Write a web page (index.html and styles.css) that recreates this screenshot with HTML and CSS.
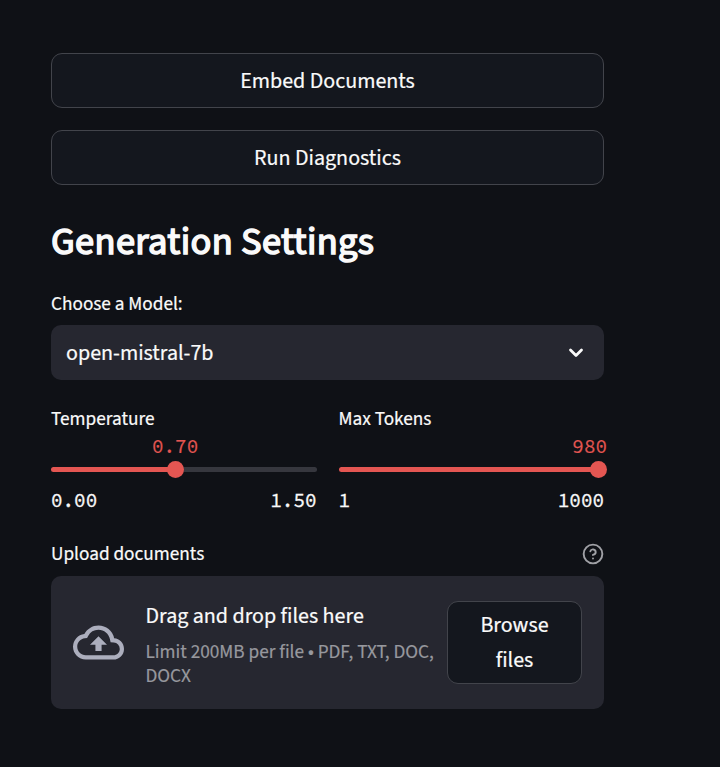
FILE: index.html
```html
<!DOCTYPE html>
<html lang="en">
<head>
<meta charset="utf-8">
<title>Generation Settings</title>
<link rel="stylesheet" href="styles.css">
</head>
<body>
<main class="panel">
  <button class="btn">Embed Documents</button>
  <button class="btn">Run Diagnostics</button>
  <h2 class="title">Generation Settings</h2>
  <div class="label model-label">Choose a Model:</div>
  <div class="select">
    <span>open-mistral-7b</span>
    <svg class="chevron" viewBox="0 0 16 10"><path d="M2.5 2l5.5 5.5 5.5-5.5"/></svg>
  </div>
  <div class="sliders">
    <section class="slider">
      <div class="label">Temperature</div>
      <div class="value value-temp">0.70</div>
      <div class="track track-temp"><i class="thumb thumb-temp"></i></div>
      <div class="range"><span>0.00</span><span>1.50</span></div>
    </section>
    <section class="slider">
      <div class="label">Max Tokens</div>
      <div class="value value-max">980</div>
      <div class="track"><i class="thumb thumb-max"></i></div>
      <div class="range"><span>1</span><span>1000</span></div>
    </section>
  </div>
  <div class="label upload-label"><span>Upload documents</span>
    <svg class="help" viewBox="0 0 24 24"><circle cx="12" cy="12" r="10.2"/><path d="M9.09 9a3 3 0 0 1 5.83 1c0 2-3 3-3 3M12 17h.01"/></svg>
  </div>
  <div class="drop">
    <svg class="cloud" viewBox="0 0 24 24"><path d="M19.35 10.04A7.49 7.49 0 0 0 12 4C9.11 4 6.6 5.64 5.35 8.04A5.994 5.994 0 0 0 0 14c0 3.31 2.69 6 6 6h13c2.76 0 5-2.24 5-5 0-2.64-2.05-4.78-4.65-4.96zM19 18H6c-2.21 0-4-1.79-4-4 0-2.05 1.53-3.76 3.56-3.97l1.07-.11.5-.95A5.469 5.469 0 0 1 12 6c2.62 0 4.88 1.86 5.39 4.43l.3 1.5 1.53.11A2.98 2.98 0 0 1 22 15c0 1.65-1.35 3-3 3zM8 13h2.55v3h2.9v-3H16l-4-4z"/></svg>
    <div class="copy">
      <div class="drag">Drag and drop files here</div>
      <div class="limit">Limit 200MB per file • PDF, TXT, DOC, DOCX</div>
    </div>
    <button class="browse">Browse files</button>
  </div>
</main>
</body>
</html>
```
FILE: styles.css
```css
* { box-sizing: border-box; }
body { margin: 0; background: #0f1116; color: #fafafa; font-family: "Source Sans Pro", "Source Sans 3", "Noto Sans CJK SC", "Noto Sans", sans-serif; font-size: 22px; -webkit-text-stroke: 0.2px; }
.panel { width: 553px; margin: 53px 0 0 51px; }
button { font: inherit; color: inherit; background: #14171e; border: 1px solid #42444b; border-radius: 11px; padding: 0; }
.btn { display: block; width: 100%; height: 55px; margin-bottom: 22px; padding-top: 1px; line-height: 53px; }
.title { margin: 33px 0 0; height: 48px; line-height: 48px; font-size: 38.5px; font-weight: 400; letter-spacing: 0.33px; -webkit-text-stroke: 1.5px; }
.label { height: 26px; line-height: 24px; font-size: 19.25px; }
.model-label { margin-top: 26px; }
.select { height: 55px; margin-top: 7px; padding: 0 20.5px 0 15px; display: flex; align-items: center; justify-content: space-between; background: #262730; border-radius: 10px; }
.chevron { width: 16px; height: 10px; fill: none; stroke: #fafafa; stroke-width: 2.8; stroke-linecap: round; stroke-linejoin: round; }
.sliders { display: grid; grid-template-columns: 1fr 1fr; gap: 22px; margin-top: 27px; }
.value { font: 19.25px/26px "Source Code Pro", "Liberation Mono", monospace; color: #e45652; height: 28px; }
.value-temp { padding-left: 101px; }
.value-max { text-align: right; margin-right: -3px; }
.track { height: 5px; margin-top: 6px; border-radius: 3px; position: relative; background: #e45652; }
.track-temp { background: linear-gradient(to right, #e45652 46.67%, #36373e 46.67%); }
.thumb { position: absolute; width: 17px; height: 17px; top: -6px; margin-left: -8.5px; border-radius: 50%; background: #e45652; }
.thumb-temp { left: 46.8%; }
.thumb-max { left: 98%; }
.range { display: flex; justify-content: space-between; height: 28px; margin-top: 15px; font: 19.25px/26px "Source Code Pro", "Liberation Mono", monospace; -webkit-text-stroke: 0.35px; }
.upload-label { margin-top: 27px; display: flex; justify-content: space-between; align-items: flex-start; }
.help { width: 22px; height: 22px; margin-top: 1px; fill: none; stroke: #a0a1a6; stroke-width: 2.1; stroke-linecap: round; }
.drop { height: 133px; margin-top: 8px; padding: 0 22px; display: flex; align-items: center; background: #262730; border-radius: 10px; }
.cloud { width: 51px; height: 51px; fill: #acaebd; flex: none; }
.copy { width: 301.5px; margin: 23px 0 0 21.5px; align-self: flex-start; flex: none; }
.drag { height: 35px; line-height: 35px; }
.limit { margin-top: 6px; font-size: 19.25px; line-height: 24px; color: #97989e; }
.browse { width: 135px; height: 83px; padding: 0 28px; line-height: 35px; flex: none; }
```
